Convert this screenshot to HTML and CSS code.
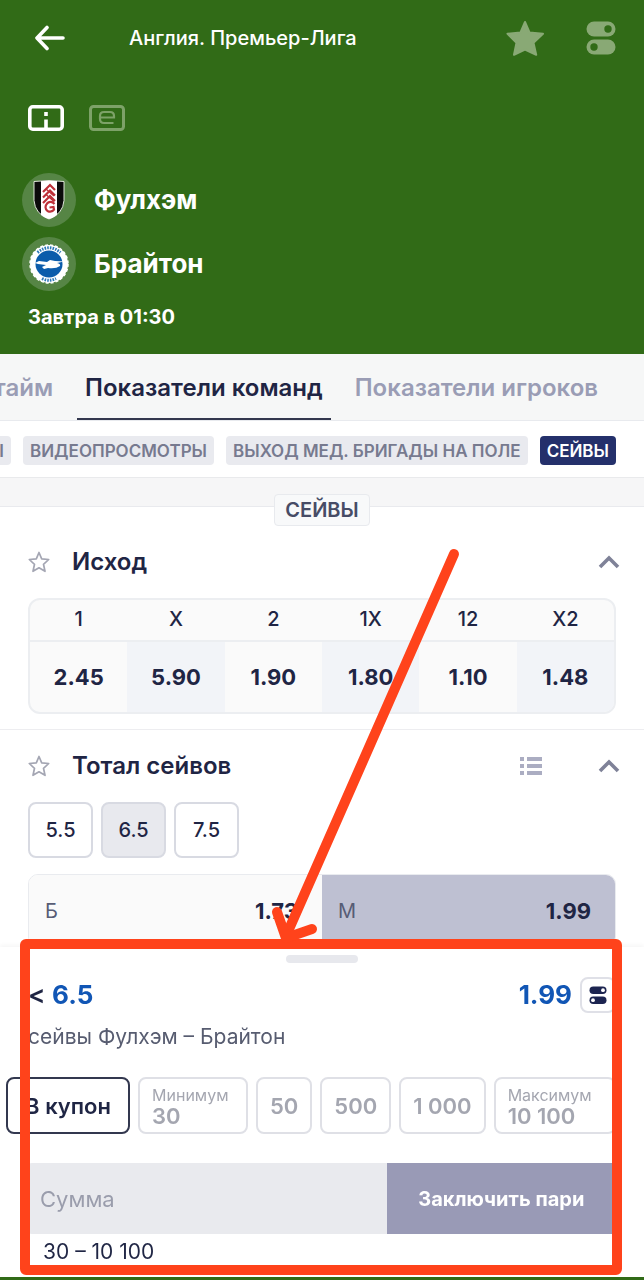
FILE: index.html
```html
<!DOCTYPE html>
<html lang="ru">
  <head>
    <meta charset="UTF-8" />
    <meta name="viewport" content="width=device-width, initial-scale=1.0" />
    <title>Фулхэм – Брайтон</title>

    <link rel="stylesheet" href="styles.css" />
  </head>
  <body>
    <header class="match">
      <div class="match__bar">
        <button class="icon-btn" aria-label="Назад">
          <svg width="30" height="26" viewBox="0 0 30 26" fill="none" stroke="#fff" stroke-width="3.6" stroke-linecap="round" stroke-linejoin="round">
            <path d="M28 13H3M12 2.500L2 13l10 10.500" />
          </svg>
        </button>
        <h1 class="match__league">Англия. Премьер-Лига</h1>
        <button class="icon-btn" aria-label="В избранное">
          <svg width="38" height="36" viewBox="0 0 38 36" fill="#89a975" stroke="#89a975" stroke-width="2" stroke-linejoin="round">
            <path d="M19 2l4.500 10.500 13.500 1.300-9.500 9 2.700 12L19 29.500 8 34.800l2.500-12L1.500 13.800l13-1.300z" />
          </svg>
        </button>
        <button class="icon-btn" aria-label="Настройки">
          <svg width="30" height="34" viewBox="0 0 30 34">
            <rect x="0.500" y="0.500" width="29" height="15" rx="7.500" fill="#89a975" />
            <rect x="0.500" y="18.500" width="29" height="15" rx="7.500" fill="#89a975" />
            <circle cx="22" cy="8" r="3.700" fill="#316b17" />
            <circle cx="8" cy="26" r="3.700" fill="#316b17" />
          </svg>
        </button>
      </div>

      <div class="match__views">
        <button class="icon-btn" aria-label="Информация">
          <svg width="36" height="26" viewBox="0 0 36 26" fill="none" stroke="#fff" stroke-width="3.600">
            <rect x="1.800" y="1.800" width="32.400" height="22.400" rx="3" />
            <path d="M18 7v4M18 14.500V24" />
          </svg>
        </button>
        <button class="icon-btn" aria-label="Трансляция">
          <svg width="36" height="26" viewBox="0 0 36 26" fill="none" stroke="#7da268" stroke-width="3">
            <rect x="1.500" y="1.500" width="33" height="23" rx="3" />
            <path d="M11 12.500h14V11q0-4-4-4h-6q-4 0-4 4v3q0 4 4 4h9.500" stroke-width="2.200" />
          </svg>
        </button>
      </div>

      <div class="team">
        <span class="team__logo">
          <svg width="32" height="40" viewBox="0 0 32 40">
            <path d="M1 1.500q15-2 30 0v19Q30 34 16 39 2 34 1 20.500z" fill="#0b0b0b" stroke="#dfe8da" />
            <path d="M8 1h16v34q-4 3-8 4-4-1-8-4z" fill="#fff" />
            <g fill="none" stroke="#bd3039" stroke-width="2.200">
              <path d="M10 12l7-7 5 5M10 17.500l7-7 5 5M10 23l7-7 5 5" />
              <path d="M13 9l8 7M13 14.500l8 7" stroke-width="1.400" />
              <path d="M21.500 24q-3-3.500-7-1-4 4.500 0 8 4 2 6.500-1.500l-.5-2.500-4 .5" />
            </g>
          </svg>
        </span>
        <span class="team__name">Фулхэм</span>
      </div>
      <div class="team">
        <span class="team__logo">
          <svg width="40" height="40" viewBox="0 0 40 40">
            <circle cx="20" cy="20" r="19" fill="#fff" />
            <circle cx="20" cy="20" r="19" fill="none" stroke="#fff" stroke-width="1.500" stroke-dasharray="3 2" />
            <circle cx="20" cy="20" r="13.500" fill="#0b5cab" />
            <path d="M8.500 8.500Q20-1 31.500 8.500M13 34.500q7 3.500 14 0" fill="none" stroke="#2d78b8" stroke-width="3" stroke-dasharray="1.600 1.100" />
            <path d="M6 19l4-2 8 1 3-2 5 1 9 .5-7 1.500q4 1 3 3-4 3-12 2l-4 1-2-2 4-2-8-1z" fill="#fff" />
          </svg>
        </span>
        <span class="team__name">Брайтон</span>
      </div>
      <p class="match__time">Завтра в 01:30</p>
    </header>

    <main class="content">
      <nav class="tabs">
        <a class="tabs__item" href="#half">1-й тайм</a>
        <a class="tabs__item tabs__item--active" href="#teams">Показатели команд</a>
        <a class="tabs__item" href="#players">Показатели игроков</a>
      </nav>

      <div class="chips">
        <button class="chip">ОФСАЙДЫ</button>
        <button class="chip">ВИДЕОПРОСМОТРЫ</button>
        <button class="chip">ВЫХОД МЕД. БРИГАДЫ НА ПОЛЕ</button>
        <button class="chip chip--active">СЕЙВЫ</button>
      </div>

      <div class="divider">
        <h2 class="divider__label">СЕЙВЫ</h2>
      </div>

      <section class="market">
        <div class="market__head">
          <button class="icon-btn" aria-label="В избранное">
            <svg width="22" height="22" viewBox="0 0 22 22" fill="none" stroke="#a4a6b3" stroke-width="1.700" stroke-linejoin="round">
              <path d="M11 1.500l2.700 6.300 7 .7-5.200 4.800 1.500 7L11 16.800l-6 3.500 1.500-7L1.300 8.500l7-.7z" />
            </svg>
          </button>
          <h3 class="market__title">Исход</h3>
          <button class="icon-btn" aria-label="Свернуть">
            <svg width="22" height="14" viewBox="0 0 22 14" fill="none" stroke="#7f8298" stroke-width="3.600">
              <path d="M2 12l9-9 9 9" />
            </svg>
          </button>
        </div>
        <table class="odds">
          <thead>
            <tr>
              <th>1</th>
              <th>X</th>
              <th>2</th>
              <th>1X</th>
              <th>12</th>
              <th>X2</th>
            </tr>
          </thead>
          <tbody>
            <tr>
              <td><button class="odds__btn">2.45</button></td>
              <td><button class="odds__btn">5.90</button></td>
              <td><button class="odds__btn">1.90</button></td>
              <td><button class="odds__btn">1.80</button></td>
              <td><button class="odds__btn">1.10</button></td>
              <td><button class="odds__btn">1.48</button></td>
            </tr>
          </tbody>
        </table>
      </section>

      <section class="market">
        <div class="market__head">
          <button class="icon-btn" aria-label="В избранное">
            <svg width="22" height="22" viewBox="0 0 22 22" fill="none" stroke="#a4a6b3" stroke-width="1.700" stroke-linejoin="round">
              <path d="M11 1.500l2.700 6.300 7 .7-5.200 4.800 1.500 7L11 16.800l-6 3.500 1.500-7L1.300 8.500l7-.7z" />
            </svg>
          </button>
          <h3 class="market__title">Тотал сейвов</h3>
          <button class="icon-btn icon-btn--list" aria-label="Списком">
            <svg width="22" height="18" viewBox="0 0 22 18" fill="#abadc2">
              <path d="M0 0h4v4H0zM7 0h15v4H7zM0 7h4v4H0zM7 7h15v4H7zM0 14h4v4H0zM7 14h15v4H7z" />
            </svg>
          </button>
          <button class="icon-btn" aria-label="Свернуть">
            <svg width="22" height="14" viewBox="0 0 22 14" fill="none" stroke="#7f8298" stroke-width="3.600">
              <path d="M2 12l9-9 9 9" />
            </svg>
          </button>
        </div>
        <div class="lines">
          <button class="lines__btn">5.5</button>
          <button class="lines__btn lines__btn--active">6.5</button>
          <button class="lines__btn">7.5</button>
        </div>
        <div class="total">
          <button class="total__btn">Б <b>1.73</b></button>
          <button class="total__btn total__btn--active">М <b>1.99</b></button>
        </div>
      </section>
    </main>

    <form class="sheet" action="#">
      <div class="sheet__handle"></div>
      <div class="sheet__head">
        <p class="sheet__pick">&lt; <b>6.5</b></p>
        <b class="sheet__odd">1.99</b>
        <button type="button" class="sheet__settings" aria-label="Настройки">
          <svg width="18" height="18" viewBox="0 0 18 18">
            <rect x="0.500" y="0.500" width="17" height="7.500" rx="3.750" fill="#1c2450" />
            <rect x="0.500" y="10.500" width="17" height="7.500" rx="3.750" fill="#1c2450" />
            <circle cx="14" cy="4.200" r="1.900" fill="#fff" />
            <circle cx="4" cy="14.200" r="1.900" fill="#fff" />
          </svg>
        </button>
      </div>
      <p class="sheet__event">сейвы Фулхэм – Брайтон</p>

      <div class="stakes">
        <button type="button" class="stake stake--coupon">В купон</button>
        <button type="button" class="stake stake--limit"><small>Минимум</small>30</button>
        <button type="button" class="stake">50</button>
        <button type="button" class="stake">500</button>
        <button type="button" class="stake">1 000</button>
        <button type="button" class="stake stake--limit stake--last"><small>Максимум</small>10 100</button>
      </div>

      <div class="bet">
        <input class="bet__sum" type="text" inputmode="numeric" id="sum" placeholder="Сумма" aria-label="Сумма" />
        <button class="bet__submit">Заключить пари</button>
      </div>
      <label class="sheet__hint" for="sum">30 – 10 100</label>

      <!-- red frame and arrow pointing at the coupon -->
      <div class="mark"></div>
      <svg class="mark-arrow" width="200" height="400" viewBox="0 0 200 400" fill="none" stroke="#ff431b" stroke-width="10" stroke-linecap="round" stroke-linejoin="round">
        <path d="M184 7L16 389" />
        <path d="M7 365L16 391L42 382" />
      </svg>
    </form>
  </body>
</html>
```

FILE: styles.css
```css
* {
  box-sizing: border-box;
}

body {
  margin: 0;
  min-height: 100vh;
  display: flex;
  flex-direction: column;
  font-family: Inter, sans-serif;
  font-size: 20px;
  line-height: 24px;
  color: #1f2544;
  background: #316b17;
}

h1,
h2,
h3,
p {
  margin: 0;
}

button,
input {
  font: inherit;
  color: inherit;
  border: 0;
  padding: 0;
  border-radius: 0;
  background: none;
}

svg {
  display: block;
}

/* match header */
.match {
  padding: 0 28px 25px;
  color: #fff;
}

.match__bar {
  display: flex;
  align-items: center;
  height: 76px;
  padding-left: 7px;
  gap: 60px;
}

.match__league {
  flex: 1;
  padding-left: 4px;
  font-size: 20px;
  font-weight: 500;
}

.match__bar .icon-btn:last-child {
  margin-left: -18px;
}

.match__views {
  display: flex;
  gap: 25px;
  padding: 29px 0 42px;
}

.team {
  display: flex;
  align-items: center;
  gap: 18px;
  margin: 0 0 10px -6px;
}

.team__logo {
  display: flex;
  align-items: center;
  justify-content: center;
  width: 54px;
  height: 54px;
  border-radius: 50%;
  background: #568545;
}

.team__name {
  font-size: 26px;
  font-weight: 700;
}

.match__time {
  padding-top: 4px;
  font-weight: 700;
}

/* tabs */
.content {
  flex: 1;
  background: #fff;
  margin-bottom: 3px;
  overflow: hidden;
}

.tabs {
  display: flex;
  justify-content: flex-end;
  gap: 16px;
  padding-right: 38px;
  background: #f6f7f7;
  border-bottom: 1px solid #e8eaee;
}

.tabs__item {
  padding: 22px 8px 18px;
  border-bottom: 2px solid transparent;
  font-size: 24px;
  font-weight: 600;
  color: #9a9db5;
  text-decoration: none;
  white-space: nowrap;
}

.tabs__item--active {
  color: #1f2544;
  border-color: #33384f;
}

.chips {
  display: flex;
  justify-content: flex-end;
  gap: 12px;
  padding: 15px 28px 12px;
}

.chip {
  padding: 0 7px;
  height: 29px;
  border-radius: 4px;
  font-size: 17px;
  font-weight: 600;
  white-space: nowrap;
  color: #777a8f;
  background: #e9eaef;
}

.chip--active {
  color: #fff;
  background: #24306b;
}

.divider {
  display: flex;
  justify-content: center;
  height: 30px;
  padding-top: 16px;
  background: #f6f6f7;
  border-top: 1px solid #e9eaec;
  border-bottom: 1px solid #e9eaee;
}

.divider__label {
  height: 32px;
  padding: 3px 10px;
  border: 1px solid #e8eaee;
  border-radius: 4px;
  font-size: 20px;
  font-weight: 600;
  color: #474c66;
  background: #f8f9fa;
}

/* markets */
.market {
  padding: 43px 28px 15px;
  border-bottom: 1px solid #ededf0;
}

.market + .market {
  padding-top: 24px;
  border-bottom: 0;
}

.market__head {
  display: flex;
  align-items: center;
  gap: 22px;
  height: 24px;
  margin: 0 -4px 24px 0;
}

.market__title {
  flex: 1;
  font-size: 24px;
  font-weight: 600;
}

.icon-btn--list {
  margin-right: 34px;
}

.odds {
  width: 100%;
  table-layout: fixed;
  border-spacing: 0;
  border: 2px solid #eceef1;
  border-radius: 12px;
  overflow: hidden;
  background: #fafafa;
}

.odds th {
  padding: 7px 0 9px;
  font-weight: 500;
  border-bottom: 2px solid #eceef1;
}

.odds td {
  padding: 0;
}

.odds td:nth-child(even) {
  background: #f2f4f8;
}

.odds__btn {
  width: 100%;
  height: 70px;
  font-size: 22px;
  font-weight: 700;
}

.lines {
  display: flex;
  gap: 8px;
  margin-bottom: 16px;
}

.lines__btn {
  width: 65px;
  height: 56px;
  border: 2px solid #d8dae2;
  border-radius: 8px;
  font-weight: 500;
}

.lines__btn--active {
  background: #e8e9ee;
}

.total {
  display: flex;
  border: 1px solid #e9ebef;
  border-radius: 10px;
  overflow: hidden;
}

.total__btn {
  flex: 1;
  display: flex;
  align-items: center;
  justify-content: space-between;
  height: 71px;
  padding: 0 24px 0 16px;
  color: #575c75;
  background: #fafafa;
}

.total__btn b {
  font-size: 22px;
  color: #1f2544;
}

.total__btn--active {
  background: #bec0d2;
}

/* coupon sheet */
.sheet {
  position: fixed;
  left: 0;
  right: 0;
  bottom: 3px;
  padding: 8px 28px 13px;
  background: #fff;
  box-shadow: 0 -2px 4px #0000000a;
}

.sheet__handle {
  width: 72px;
  height: 8px;
  margin: 0 auto 14px;
  border-radius: 4px;
  background: #e7e8ed;
}

.sheet__head {
  display: flex;
  align-items: center;
  gap: 8px;
  height: 36px;
  font-size: 26px;
  font-weight: 600;
}

.sheet__pick {
  flex: 1;
}

.sheet__pick b,
.sheet__odd {
  font-weight: 700;
  color: #1156b5;
}

.sheet__settings {
  display: flex;
  align-items: center;
  justify-content: center;
  width: 36px;
  height: 36px;
  border: 2px solid #dfe0e7;
  border-radius: 8px;
}

.sheet__event {
  padding: 12px 0 28px;
  font-size: 21px;
  color: #575c70;
}

.stakes {
  display: flex;
  gap: 8px;
  margin-left: -22px;
}

.stake {
  flex: none;
  height: 57px;
  padding: 0 12px;
  border: 2px solid #dfe0e6;
  border-radius: 8px;
  font-size: 22px;
  font-weight: 600;
  line-height: 22px;
  color: #a4a6b0;
}

.stake small {
  display: block;
  font-size: 16px;
  font-weight: 400;
  line-height: 20px;
}

.stake--coupon {
  width: 124px;
  color: #1f2544;
  border-color: #33384f;
}

.stake--limit {
  width: 110px;
  text-align: left;
}

.stake--last {
  width: auto;
  flex: 1;
}

.bet {
  display: flex;
  margin-top: 29px;
}

.bet__sum {
  flex: 1;
  min-width: 0;
  height: 71px;
  padding-left: 12px;
  border-radius: 4px 0 0 4px;
  font-size: 22px;
  background: #e9eaee;
}

.bet__sum::placeholder {
  color: #9a9dac;
}

.bet__submit {
  width: 39%;
  font-weight: 700;
  color: #fff;
  background: #999ab6;
  border-radius: 0 4px 4px 0;
}

.sheet__hint {
  display: block;
  padding: 6px 0 0 15px;
  font-size: 21px;
}

.mark {
  position: absolute;
  inset: -8px 22px 2px 20px;
  border: 10px solid #ff431b;
  border-radius: 6px;
  pointer-events: none;
}

.mark-arrow {
  position: absolute;
  left: calc(50% - 52px);
  top: -400px;
  pointer-events: none;
}
```
